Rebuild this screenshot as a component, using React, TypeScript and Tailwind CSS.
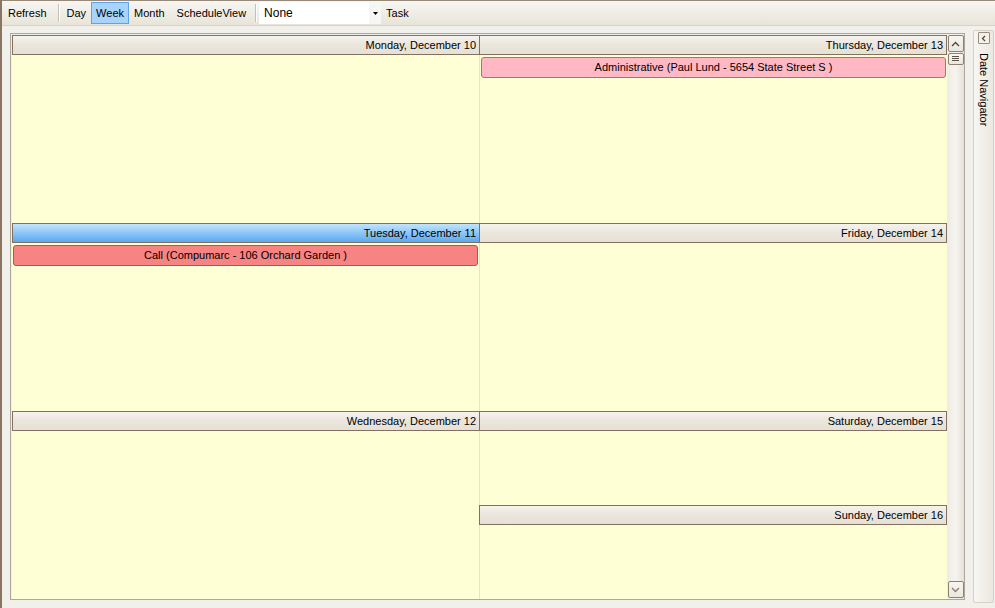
import React from "react";

const font = { fontFamily: '"Liberation Sans", Arial, sans-serif' };

function Sep({ className }: { className?: string }) {
  return <div className={"h-[18px] w-[2px] border-l border-[#c5c0b4] border-r border-r-white " + (className || "")} />;
}

function TBtn({ label, active }: { label: string; active?: boolean }) {
  return (
    <div
      className={
        "flex h-[22px] items-center px-[4px] text-[11px] text-black " +
        (active ? "border border-[#5fa3e6] bg-[#a8d3fb]" : "border border-transparent")
      }
    >
      {label}
    </div>
  );
}

function Header({ label, active, noLeft, overlap }: { label: string; active?: boolean; noLeft?: boolean; overlap?: boolean }) {
  return (
    <div
      className={
        "flex h-[20px] shrink-0 items-center justify-end border border-[#84705f] pr-[3px] text-[11px] text-black " +
        (noLeft ? "border-l-0 " : "") +
        (overlap ? "-ml-[1px] " : "") +
        (active
          ? "bg-gradient-to-b from-[#c3e4fd] via-[#8cc6f8] to-[#5aa8f0]"
          : "bg-gradient-to-b from-[#f5f3ef] via-[#ebe6dc] to-[#e6e1d5]")
      }
    >
      {label}
    </div>
  );
}

function Appt({ label, pink }: { label: string; pink?: boolean }) {
  return (
    <div
      className={
        "mx-[1px] mt-[2px] flex h-[21px] items-center justify-center rounded-[3px] border text-[11px] text-black " +
        (pink ? "border-[#a8707a] bg-[#ffb8c4]" : "border-[#a05a5a] bg-[#f88383]")
      }
    >
      {label}
    </div>
  );
}

function Day({
  label,
  h,
  active,
  noLeft,
  overlap,
  divider,
  children,
}: {
  label: string;
  h: string;
  active?: boolean;
  noLeft?: boolean;
  overlap?: boolean;
  divider?: boolean;
  children?: React.ReactNode;
}) {
  return (
    <div className={"flex flex-col " + h}>
      <Header label={label} active={active} noLeft={noLeft} overlap={overlap} />
      <div className={"flex-1 bg-[#ffffd5] " + (divider ? "border-r border-[#f1e3b4]" : "")}>{children}</div>
    </div>
  );
}

function ScrollBtn({ children, className }: { children: React.ReactNode; className?: string }) {
  return (
    <div
      className={
        "mx-auto flex w-[16px] items-center justify-center rounded-[2px] border border-[#8f8072] bg-gradient-to-b from-[#f7f5f1] to-[#ebe7de] " +
        (className || "")
      }
    >
      {children}
    </div>
  );
}

export default function App() {
  return (
    <div className="flex h-[608px] w-[995px] flex-col overflow-hidden border-l-2 border-[#8a7562] bg-[#f2f0ea]" style={font}>
      {/* Toolbar */}
      <div className="flex h-[26px] shrink-0 items-center border-t border-[#988878] border-b border-b-[#d8d3c7] bg-gradient-to-b from-[#f7f6f2] to-[#e8e4d9] pl-[1px]">
        <TBtn label="Refresh" />
        <Sep className="ml-[6px] mr-[2px]" />
        <TBtn label="Day" />
        <TBtn label="Week" active />
        <TBtn label="Month" />
        <div className="w-[2px]" />
        <TBtn label="ScheduleView" />
        <Sep className="ml-[4px] mr-[2px]" />
        <div className="flex h-[22px] w-[122px] items-center bg-white">
          <span className="flex-1 pl-[5px] text-[12px] text-black">None</span>
          <div className="flex h-full w-[12px] items-center justify-center bg-[#f6f6f4]">
            <svg width="5" height="3" viewBox="0 0 5 3">
              <path d="M0 0h5L2.5 3z" fill="#000" />
            </svg>
          </div>
        </div>
        <TBtn label="Task" />
      </div>

      {/* Body */}
      <div className="flex flex-1 pl-[8px] pt-[7px] pb-[8px]">
        <div className="flex w-[955px] border border-[#aca79c] bg-[#f2f0ea] pl-[1px] pt-[1px]">
          {/* Left column */}
          <div className="flex w-[468px] flex-col">
            <Day label="Monday, December 10" h="h-[188px]" divider />
            <Day label="Tuesday, December 11" h="h-[188px]" active divider>
              <Appt label="Call (Compumarc - 106 Orchard Garden )" />
            </Day>
            <Day label="Wednesday, December 12" h="flex-1" divider />
          </div>
          {/* Right column */}
          <div className="flex w-[467px] flex-col">
            <Day label="Thursday, December 13" h="h-[188px]" noLeft>
              <Appt label="Administrative (Paul Lund - 5654 State Street S )" pink />
            </Day>
            <Day label="Friday, December 14" h="h-[188px]" noLeft />
            <Day label="Saturday, December 15" h="h-[94px]" noLeft />
            <Day label="Sunday, December 16" h="flex-1" overlap />
          </div>
          {/* Scrollbar */}
          <div className="flex w-[17px] flex-col bg-gradient-to-r from-[#eeebe4] via-[#f6f4f0] to-[#e6e2d8] pb-[1px]">
            <ScrollBtn className="h-[17px]">
              <svg width="9" height="6" viewBox="0 0 9 6">
                <path d="M1 5l3.5-3.5L8 5" stroke="#4e463e" strokeWidth="1.3" fill="none" />
              </svg>
            </ScrollBtn>
            <ScrollBtn className="mt-[1px] h-[12px]">
              <svg width="9" height="6" viewBox="0 0 9 6">
                <path d="M1 0.5h7M1 2.5h7M1 4.5h7" stroke="#5a5148" strokeWidth="1" fill="none" />
              </svg>
            </ScrollBtn>
            <div className="flex-1" />
            <ScrollBtn className="h-[17px]">
              <svg width="9" height="6" viewBox="0 0 9 6">
                <path d="M1 1l3.5 3.5L8 1" stroke="#8a7b6c" strokeWidth="1.3" fill="none" />
              </svg>
            </ScrollBtn>
          </div>
        </div>
        <div className="w-[8px]" />
        {/* Date Navigator */}
        <div className="-mt-[3px] mb-[-3px] flex w-[21px] flex-col items-center rounded-[2px] border border-[#d6d1c5] bg-gradient-to-r from-[#f7f6f2] to-[#ece8df]">
          <div className="mt-[1px] flex h-[12px] w-[12px] items-center justify-center rounded-[1px] border border-[#9a8c7e] bg-[#f3f1ea]">
            <svg width="6" height="7" viewBox="0 0 6 7">
              <path d="M4 1L1.5 3.5L4 6" stroke="#4a423a" strokeWidth="1.2" fill="none" />
            </svg>
          </div>
          <div className="mt-[9px] text-[11px] text-black [writing-mode:vertical-rl]">Date Navigator</div>
        </div>
      </div>
    </div>
  );
}
